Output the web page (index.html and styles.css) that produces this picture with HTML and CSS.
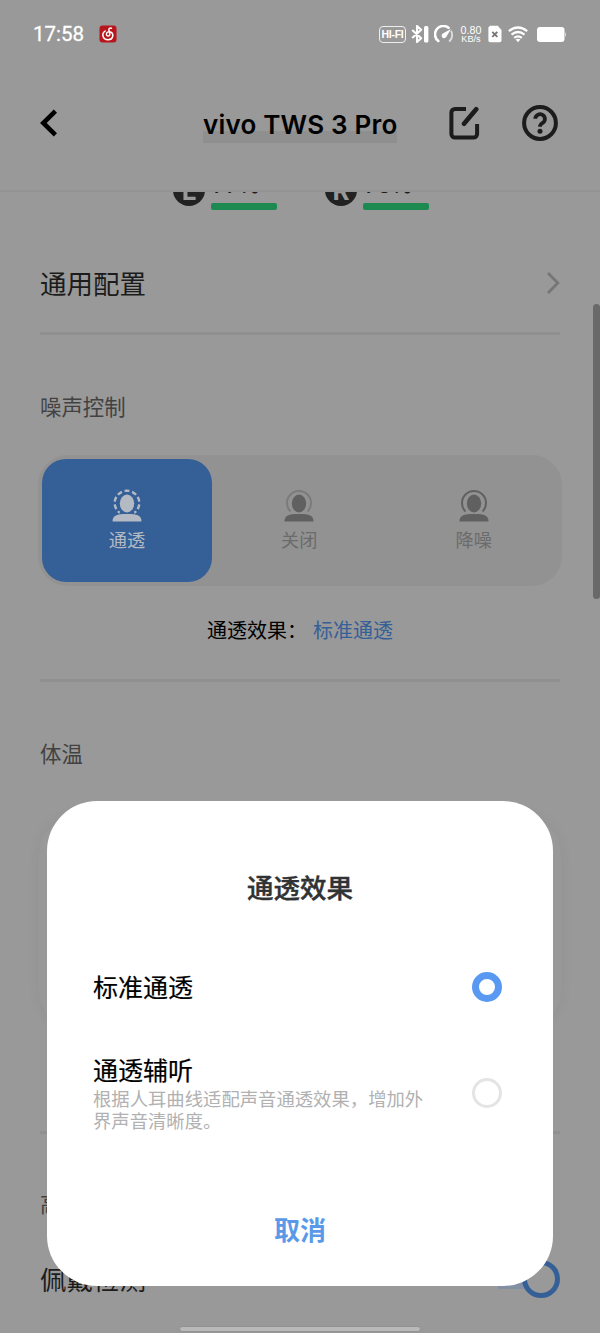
FILE: index.html
```
<!DOCTYPE html>
<html lang="zh-CN">
<head>
<meta charset="utf-8">
<title>vivo TWS 3 Pro</title>
<link rel="stylesheet" href="styles.css">
</head>
<body>
<div class="screen">
  <div class="status">
    <span class="time">17:58</span>
    <svg class="app" width="18" height="18" viewBox="0 0 18 18"><rect x=".5" y=".5" width="17" height="17" rx="3" fill="#b9151c"/><path d="M12.4 3.2C10.8 2.8 9.7 3.6 9.9 5l.9 4.2c.2 2.3-3.5 2.3-3.4-.1.1-2.2 3-3.2 5-1.7 2.400 1.800 1.900 7.200-3.200 7.400C4 15 1.900 8.900 6.200 6" fill="none" stroke="#fff" stroke-width="1.500" stroke-linecap="round"/></svg>
    <div class="sys">
      <span class="hifi">HI-FI</span>
      <svg class="bt" width="18" height="18" viewBox="0 0 18 18"><path d="M1.200 5l9 8.200L6 17V1l4.200 3.800-9 8.200" fill="none" stroke="#fff" stroke-width="2.100" stroke-linejoin="round"/><rect x="13" y="1" width="4.400" height="16.500" rx="1.500" fill="#fff"/></svg>
      <svg class="gauge" width="20" height="18" viewBox="0 0 20 18"><path d="M4.300 16A8.300 8.300 0 0 1 14.500 2.700" fill="none" stroke="#fff" stroke-width="2.600" stroke-linecap="round"/><path d="M17.400 6.500c1.300 3.300.8 6.800-1.700 9.500" fill="none" stroke="#ddd" stroke-width="1.900" stroke-linecap="round"/><path d="M17 4l-4.500 7.600a2.500 2.500 0 1 1-3.700-3z" fill="#fff"/></svg>
      <span class="rate"><b>0.80</b><b>KB/s</b></span>
      <svg class="sim" width="14" height="18" viewBox="0 0 14 18"><path d="M2 .8h7.800L13.500 5v10.500a1.800 1.800 0 0 1-1.800 1.800H2.200a1.800 1.800 0 0 1-1.800-1.800V2.500Z" fill="#fff"/><path d="M4.300 6.800l5 5m0-5l-5 5" stroke="#777" stroke-width="1.900"/></svg>
      <svg class="wifi" width="20" height="17" viewBox="0 0 20 17"><g fill="none" stroke="#fff" stroke-width="2.200"><path d="M.8 5.200Q10-2.200 19.200 5.200M3.500 8.600q6.500-5.200 13 0M6.200 11.900q3.800-3 7.600 0"/></g><path d="M7.600 13.600q2.400-1.600 4.800 0L10 16.200z" fill="#fff"/></svg>
      <svg class="batt" width="31" height="17" viewBox="0 0 31 17"><rect x="1" y="1" width="27.500" height="15" rx="3" fill="#fff"/><path d="M29 6q2 2.500 0 5z" fill="#ddd"/></svg>
    </div>
  </div>
  <header class="header">
    <svg class="back" width="18" height="28" viewBox="0 0 18 28"><path d="M15.400 2.200L3.300 14l12.100 11.800" fill="none" stroke="#000" stroke-width="4.600"/></svg>
    <h1 class="title">vivo TWS 3 Pro</h1>
    <svg class="edit" width="32" height="34" viewBox="0 0 32 34"><path d="M17 2.900H6a3.600 3.600 0 0 0-3.600 3.600V28A3.600 3.600 0 0 0 6 31.600h18.500a3.600 3.600 0 0 0 3.600-3.600V18" fill="none" stroke="#1c1c1c" stroke-width="4"/><path d="M27.200 3.200L15 17.800" stroke="#1c1c1c" stroke-width="4.600" stroke-linecap="round"/></svg>
    <svg class="help" width="36" height="36" viewBox="0 0 36 36"><circle cx="18" cy="18" r="15.900" fill="none" stroke="#1c1c1c" stroke-width="4"/><path d="M13.300 13.800a4.800 4.700 0 1 1 7.200 4.200c-1.800 1.100-2.500 1.600-2.500 3.800" fill="none" stroke="#1c1c1c" stroke-width="3.800"/><circle cx="18" cy="26.300" r="2.500" fill="#1c1c1c"/></svg>
  </header>
  <div class="levels">
    <div class="level"><span class="ear">L</span><span class="meter">77%</span></div>
    <div class="level"><span class="ear">R</span><span class="meter">76%</span></div>
  </div>
  <main class="main">
    <div class="row general"><span>通用配置</span><svg width="14" height="24" viewBox="0 0 14 24"><path d="M2 2l9.800 10L2 22" fill="none" stroke="#767676" stroke-width="2.800"/></svg></div>
    <h2 class="section noise">噪声控制</h2>
    <div class="modes">
      <div class="mode on"><svg width="32" height="34" viewBox="0 0 32 34"><circle cx="16" cy="14" r="12.300" fill="none" stroke="#b3bac4" stroke-width="2.400" stroke-dasharray="5 2.730" stroke-dashoffset="2.500" pathLength="77.300" transform="rotate(-90 16 14)"/><path class="gap" d="M7 30L9 22.500h14l2 7.500z"/><ellipse cx="16" cy="14.500" rx="7.200" ry="9" fill="#b3bac4"/><path d="M1.500 32.500c0-6 4-7.500 14.500-7.500s14.500 1.500 14.500 7.500z" fill="#b3bac4"/></svg><span>通透</span></div>
      <div class="mode off"><svg width="32" height="34" viewBox="0 0 32 34"><path d="M7.500 22.500a12 12 0 1 1 17 0" fill="none" stroke="#7a7a7a" stroke-width="1.900"/><ellipse cx="16" cy="14.500" rx="7.200" ry="9" fill="#606060"/><path d="M1.500 32.500c0-6 4-7.500 14.500-7.500s14.500 1.500 14.500 7.500z" fill="#606060"/></svg><span>关闭</span></div>
      <div class="mode"><svg width="32" height="34" viewBox="0 0 32 34"><path d="M7.500 22.500a12 12 0 1 1 17 0" fill="none" stroke="#606060" stroke-width="2"/><ellipse cx="16" cy="14.500" rx="7.200" ry="9" fill="#606060"/><path d="M1.500 32.500c0-6 4-7.500 14.500-7.500s14.500 1.500 14.500 7.500z" fill="#606060"/></svg><span>降噪</span></div>
    </div>
    <div class="effect"><span>通透效果：</span><span class="value">标准通透</span></div>
    <h2 class="section temp">体温</h2>
    <div class="card"></div>
    <h2 class="section advanced">高级功能</h2>
    <div class="row wear"><span>佩戴检测</span><span class="toggle"><i class="knob"></i></span></div>
  </main>
  <div class="scrollbar"></div>
  <div class="home"></div>
  <section class="dialog">
    <h2 class="dialog-title">通透效果</h2>
    <div class="option first"><div class="name">标准通透</div><span class="radio checked"></span></div>
    <div class="option second"><div class="copy"><div class="name">通透辅听</div><p class="desc">根据人耳曲线适配声音通透效果，增加外界声音清晰度。</p></div><span class="radio"></span></div>
    <div class="cancel">取消</div>
  </section>
</div>
</body>
</html>
```
FILE: styles.css
```
* { box-sizing: border-box; }
body { margin: 0; }
svg { display: block; flex: none; }
h1, h2, p { margin: 0; font-weight: 400; }
.screen { position: relative; width: 600px; height: 1333px; overflow: hidden; background: #999; color: #1c1c1c; font-family: Inter, "Noto Sans CJK SC", sans-serif; }

.status { display: flex; align-items: center; height: 68px; padding: 0 33px; color: #fff; }
.time { width: 51px; font: 400 20.500px/24px Roboto, sans-serif; -webkit-text-stroke: .3px #fff; white-space: nowrap; }
.app { margin-left: 15px; margin-top: -1px; }
.sys { display: flex; align-items: center; margin-left: auto; }
.hifi { width: 27px; height: 17px; border: 1.500px solid #eee; border-radius: 4px; font: 700 10.500px/15px "Liberation Sans", sans-serif; letter-spacing: -.3px; text-align: center; white-space: nowrap; }
.bt { margin-left: 5px; }
.gauge { margin-left: 5px; }
.rate { display: flex; flex-direction: column; width: 22px; margin-left: 6px; text-align: center; }
.rate b { font: 400 10.700px/10px "Liberation Sans", sans-serif; white-space: nowrap; }
.rate b + b { font-size: 9.200px; line-height: 9px; }
.sim { margin-left: 6px; }
.wifi { margin-left: 6px; }
.batt { margin-left: 8px; }

.header { display: flex; align-items: center; height: 124px; padding: 0 42px 12px 40px; border-bottom: 2px solid #939393; }
.title { width: 194px; height: 39px; margin-left: 145px; background: linear-gradient(transparent 27px, #8f8f8f 27px); background-repeat: no-repeat; font: 600 26px/41px Inter, sans-serif; letter-spacing: .2px; color: #000; white-space: nowrap; }
.edit { margin-left: 52px; }
.help { margin-left: auto; }

.levels { display: flex; align-items: flex-end; gap: 48px; height: 18px; padding-left: 173px; overflow: hidden; }
.level { display: flex; align-items: flex-end; gap: 6px; width: 104px; }
.ear { width: 32px; height: 32px; margin-bottom: 4px; border-radius: 50%; background: #222; color: #999; font: 700 26px/34px Inter, sans-serif; text-align: center; }
.meter { display: flex; flex-direction: column; width: 66px; padding-left: 2px; font: 500 22px/35px Inter, sans-serif; }
.meter::after { content: ""; height: 7px; margin-left: -2px; border-radius: 2px; background: #1d8a51; }

.main { padding: 0 40px; }
.row { display: flex; align-items: center; justify-content: space-between; font-size: 26.500px; line-height: 40px; }
.general { height: 125px; padding: 24px 0 0; border-bottom: 3px solid #909090; }
.general span { padding-top: 2px; }
.section { font-size: 21.400px; line-height: 32px; color: #424242; }
.noise { margin-top: 56px; }
.modes { display: flex; height: 131px; margin: 32px -2px 0; padding: 4px 1px 4px 4px; border-radius: 30px; background: #929292; }
.mode { display: flex; flex: 1; flex-direction: column; align-items: center; height: 123px; padding-top: 30px; border-radius: 24px; font-size: 18.200px; line-height: 30px; color: #6b6b6b; }
.mode span { margin-top: 2px; }
.on { flex: 0 0 170px; background: #355f97; color: #b3bac4; }
.gap { fill: #355f97; }
.effect { display: flex; justify-content: center; gap: 6px; height: 96px; padding-top: 30px; border-bottom: 3px solid #909090; font-size: 20px; line-height: 30px; color: #000; }
.value { color: #355f97; }
.temp { margin-top: 56px; }
.card { height: 215px; margin: 45px -1px 0; border-radius: 40px; background: #999; box-shadow: 0 0 14px rgba(0, 0, 0, .05); }
.advanced { margin-top: 101px; padding-top: 54px; border-top: 3px solid #909090; }
.wear { margin-top: 38px; }
.wear span:first-child { padding-top: 2px; }
.toggle { display: flex; justify-content: flex-end; width: 62px; height: 38px; background: linear-gradient(#8390a3, #8390a3) 0 50% / 50px 20px no-repeat; }
.knob { width: 38px; height: 38px; border: 5px solid #355f97; border-radius: 50%; background: #999; }

.scrollbar { position: absolute; right: 0; top: 304px; width: 7px; height: 295px; border-radius: 4px; background: #696969; }
.home { position: absolute; left: 180px; top: 1327px; width: 240px; height: 4px; border-radius: 2px; background: #b9b9b9; box-shadow: 0 0 2px #808080; }

.dialog { position: absolute; left: 47px; top: 801px; width: 506px; height: 485px; padding: 67px 51px 0 46px; border-radius: 50px; background: #fff; }
.dialog-title { margin-right: -5px; font-size: 26.500px; font-weight: 500; line-height: 40px; text-align: center; color: #303234; -webkit-text-stroke: .4px #303234; }
.option { display: flex; align-items: center; justify-content: space-between; }
.name { font-size: 25px; line-height: 38px; color: #000; -webkit-text-stroke: .2px #000; }
.first { margin-top: 61px; }
.first .radio { margin-top: -2px; }
.radio { flex: none; width: 30px; height: 30px; border: 3px solid #e4e4e4; border-radius: 50%; }
.checked { border: 7px solid #5999f2; }
.second { margin-top: 45px; }
.desc { width: 332px; margin-top: -2px; padding-bottom: 2px; font-size: 18.350px; line-height: 22px; color: #b1b1b1; }
.cancel { margin-top: 77px; margin-right: -5px; font-size: 26px; font-weight: 700; line-height: 40px; text-align: center; color: #5999e8; }
```
